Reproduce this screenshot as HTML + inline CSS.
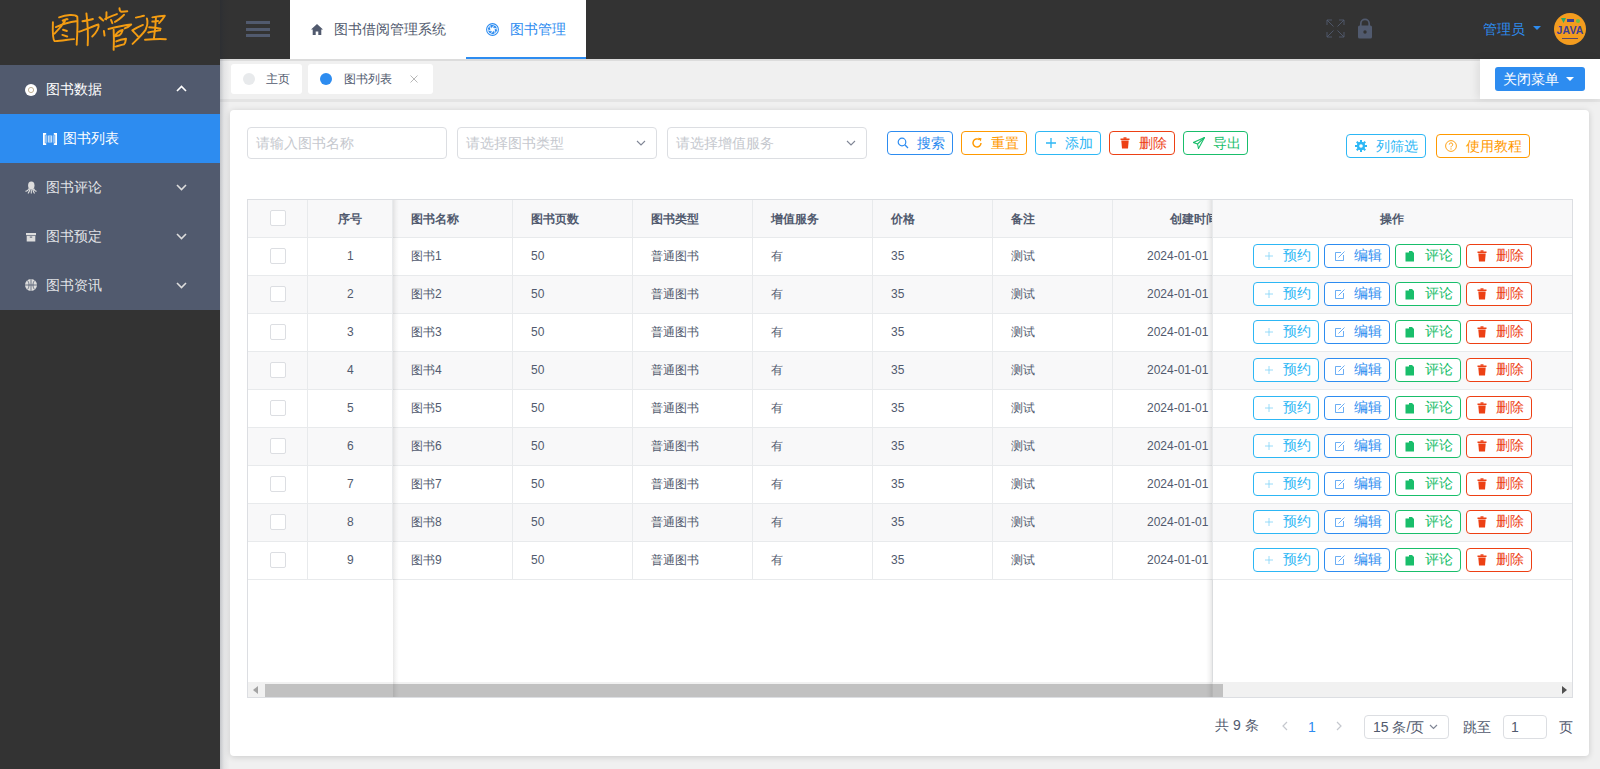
<!DOCTYPE html><html><head><meta charset="utf-8"><style>
*{box-sizing:border-box;margin:0;padding:0}
html,body{width:1600px;height:769px;overflow:hidden;background:#f0f0f0;font-family:"Liberation Sans",sans-serif;color:#515a6e;}
.a{position:absolute}
.t{position:absolute;white-space:nowrap;line-height:1}
#side{left:0;top:0;width:220px;height:769px;background:#333333;}
#menu{left:0;top:65px;width:220px;height:245px;background:#515a6e}
#head{left:220px;top:0;width:1380px;height:59px;background:#333333}
#tags{left:220px;top:59px;width:1380px;height:43px;background:#f0f0f0}
.card{left:230px;top:110px;width:1359px;height:646px;background:#fff;border-radius:4px;box-shadow:0 1px 6px rgba(0,0,0,.16)}
.btn{position:absolute;height:24px;border:1px solid;border-radius:4px;background:#fff;font-size:14px;line-height:22px}
.btn span{position:absolute;top:0;line-height:22px;white-space:nowrap}
.inp{position:absolute;height:32px;border:1px solid #dcdee2;border-radius:4px;background:#fff}
.ph{position:absolute;left:8px;top:0;line-height:30px;font-size:14px;color:#c5c8ce;white-space:nowrap}
.cell{position:absolute;font-size:12px;line-height:1;white-space:nowrap}
</style></head><body><div id="side" class="a"></div>
<svg class="a" style="left:50px;top:5px" width="120" height="50" viewBox="0 0 1846 769"><path d="M 45 265 C 40 400 35 520 70 555 C 150 560 280 530 370 525 M 140 190 C 250 150 380 140 420 180 C 430 300 420 450 410 610 M 250 215 C 200 300 130 380 70 440 M 90 340 C 200 290 300 260 400 250 M 195 240 C 220 225 250 215 270 220 M 200 380 L 260 400 M 190 460 L 265 485 M 500 250 C 560 240 620 230 660 215 M 450 410 C 550 380 650 330 745 300 C 760 340 720 420 650 485 M 560 130 C 575 250 590 450 580 620 M 760 190 C 780 210 800 230 820 240 M 769 190 L 809 230 M 869 110 C 869 150 867 190 864 220 M 849 215 C 909 185 969 160 1029 140 M 1069 50 C 1069 80 1079 100 1099 105 C 1129 100 1159 95 1189 95 M 1139 150 C 1089 200 1039 240 999 260 M 939 230 L 959 280 M 829 400 L 839 470 M 899 370 C 1019 340 1149 310 1249 300 C 1219 330 1189 345 1149 360 M 979 380 C 984 480 984 600 979 690 M 999 480 C 1029 420 1069 395 1119 385 C 1109 420 1089 450 1069 465 C 1049 470 1019 475 999 480 M 1019 560 C 1069 535 1119 525 1169 520 C 1164 560 1154 590 1139 605 C 1089 615 1049 630 1009 640 M 1322 194 C 1366 186 1406 174 1446 166 M 1490 206 C 1506 254 1502 310 1470 382 C 1414 462 1334 534 1270 598 M 1430 306 C 1382 326 1318 358 1266 390 C 1294 422 1326 446 1350 478 M 1574 190 C 1638 178 1702 166 1766 166 C 1742 206 1710 246 1678 278 M 1574 254 C 1606 250 1638 246 1662 246 M 1526 342 C 1582 346 1646 354 1702 366 M 1510 422 C 1574 410 1638 398 1694 390 M 1630 194 C 1626 302 1614 414 1598 518 M 1462 534 C 1566 526 1678 522 1782 526" fill="none" stroke="#f39c12" stroke-width="30" stroke-linecap="round" stroke-linejoin="round"/></svg>
<div id="menu" class="a"></div>
<div class="a" style="left:0;top:114px;width:220px;height:49px;background:#2d8cf0"></div>
<div class="t" style="left:63px;top:131px;font-size:14px;color:#fff">图书列表</div>
<div class="t" style="left:46px;top:82px;font-size:14px;color:#fff">图书数据</div>
<svg class="a" style="left:176px;top:85px" width="11" height="7" viewBox="0 0 11 7"><path d="M1 6 L5.5 1.5 L10 6" fill="none" stroke="#fff" stroke-width="1.6"/></svg>
<div class="t" style="left:46px;top:180px;font-size:14px;color:rgba(255,255,255,.85)">图书评论</div>
<svg class="a" style="left:176px;top:184px" width="11" height="7" viewBox="0 0 11 7"><path d="M1 1 L5.5 5.5 L10 1" fill="none" stroke="#ddd" stroke-width="1.6"/></svg>
<div class="t" style="left:46px;top:229px;font-size:14px;color:rgba(255,255,255,.85)">图书预定</div>
<svg class="a" style="left:176px;top:233px" width="11" height="7" viewBox="0 0 11 7"><path d="M1 1 L5.5 5.5 L10 1" fill="none" stroke="#ddd" stroke-width="1.6"/></svg>
<div class="t" style="left:46px;top:278px;font-size:14px;color:rgba(255,255,255,.85)">图书资讯</div>
<svg class="a" style="left:176px;top:282px" width="11" height="7" viewBox="0 0 11 7"><path d="M1 1 L5.5 5.5 L10 1" fill="none" stroke="#ddd" stroke-width="1.6"/></svg>
<svg class="a" style="left:25px;top:84px" width="12" height="12" viewBox="0 0 12 12"><circle cx="6" cy="6" r="6" fill="#fff"/><circle cx="6" cy="6" r="2.6" fill="none" stroke="#b9a98a" stroke-width="0.9"/></svg>
<svg class="a" style="left:43px;top:133px" width="14" height="12" viewBox="0 0 14 12"><path d="M0 0H3.2V1.8H1.8V10.2H3.2V12H0Z M14 0H10.8V1.8H12.2V10.2H10.8V12H14Z" fill="#fff"/><path d="M3 2.2V9.8 M5.3 2.5V9.5 M7 2.2V9.8 M8.7 2.5V9.5 M11 2.2V9.8" stroke="#fff" stroke-width="0.9"/></svg>
<svg class="a" style="left:25px;top:181px" width="12" height="13" viewBox="0 0 12 13"><ellipse cx="6.3" cy="4.5" rx="3.2" ry="4" fill="#ddd"/><path d="M4 7.5 C3 9.5 1.5 10.5 0.5 10 M5 8 C4.5 10 3.8 11.5 3 12.5 M6.3 8.5 V12.5 M7.6 8 C8.2 10 8.8 11.5 9.5 12.5 M8.6 7.5 C9.5 9.5 10.5 10.5 11.5 10" fill="none" stroke="#ddd" stroke-width="1.1"/></svg>
<svg class="a" style="left:26px;top:233px" width="10" height="8.5" viewBox="0 0 10 8.5"><rect x="0" y="0" width="10" height="2.2" fill="#ddd"/><rect x="0.7" y="2.8" width="8.6" height="5.7" fill="#ddd"/><rect x="3.8" y="3.6" width="2.4" height="1" fill="#515a6e"/></svg>
<svg class="a" style="left:25px;top:279px" width="12" height="12" viewBox="0 0 12 12"><circle cx="6" cy="6" r="6" fill="#ddd"/><path d="M6 0V12 M0 6H12 M2.5 1.5 C4.5 4 4.5 8 2.5 10.5 M9.5 1.5 C7.5 4 7.5 8 9.5 10.5" stroke="#515a6e" stroke-width="0.8" fill="none"/></svg>
<div id="head" class="a"></div>
<div class="a" style="left:220px;top:0;width:10px;height:769px;background:linear-gradient(90deg,rgba(20,30,50,.2),rgba(20,30,50,.06) 40%,rgba(0,0,0,0));z-index:5"></div>
<div class="a" style="left:246px;top:21px;width:24px;height:3px;background:#515a6e"></div>
<div class="a" style="left:246px;top:27.5px;width:24px;height:3px;background:#515a6e"></div>
<div class="a" style="left:246px;top:34px;width:24px;height:3px;background:#515a6e"></div>
<div class="a" style="left:290px;top:0;width:296px;height:59px;background:#fff"></div>
<div class="a" style="left:466px;top:57px;width:120px;height:2px;background:#2d8cf0"></div>
<svg class="a" style="left:311px;top:24px" width="12" height="11" viewBox="0 0 12 11"><path d="M6 0 L12 5.5 L10.3 5.5 L10.3 11 L7.3 11 L7.3 7.5 L4.7 7.5 L4.7 11 L1.7 11 L1.7 5.5 L0 5.5Z" fill="#515a6e"/></svg>
<div class="t" style="left:334px;top:22px;font-size:14px;color:#515a6e">图书借阅管理系统</div>
<svg class="a" style="left:486px;top:23px" width="13" height="13" viewBox="0 0 13 13"><circle cx="6.5" cy="6.5" r="5.9" fill="none" stroke="#2d8cf0" stroke-width="1.1"/><clipPath id="apc"><circle cx="6.5" cy="6.5" r="4.7"/></clipPath><g clip-path="url(#apc)"><circle cx="6.5" cy="6.5" r="4.7" fill="#2d8cf0"/><path d="M8.34 6.99L4.09 11.23 M6.99 8.34L1.20 6.78 M5.16 7.84L3.60 2.05 M4.66 6.01L8.91 1.77 M6.01 4.66L11.80 6.22 M7.84 5.16L9.40 10.95" stroke="#fff" stroke-width="0.9"/><path d="M8.34 6.99 L6.99 8.34 L5.16 7.84 L4.66 6.01 L6.01 4.66 L7.84 5.16Z" fill="#fff"/></g></svg>
<div class="t" style="left:510px;top:22px;font-size:14px;color:#2d8cf0">图书管理</div>
<svg class="a" style="left:1326px;top:19px" width="19" height="19" viewBox="0 0 19 19"><g fill="none" stroke="#515a6e" stroke-width="0.9"><path d="M1 6V1H6 M13 1H18V6 M18 13V18H13 M6 18H1V13 M1 1L7.5 7.5 M18 1L11.5 7.5 M18 18L11.5 11.5 M1 18L7.5 11.5"/></g></svg>
<svg class="a" style="left:1357px;top:18px" width="16" height="21" viewBox="0 0 16 21"><path d="M3.8 8V5.6A4.2 4.2 0 0 1 12.2 5.6V8" fill="none" stroke="#515a6e" stroke-width="1.7"/><rect x="1" y="7.5" width="14" height="13" rx="1.5" fill="#515a6e"/><circle cx="8" cy="14" r="1.7" fill="#333"/></svg>
<div class="t" style="left:1483px;top:22px;font-size:14px;color:#2d8cf0">管理员</div>
<svg class="a" style="left:1533px;top:26px" width="8" height="4" viewBox="0 0 8 4"><path d="M0 0H8L4 4Z" fill="#2d8cf0"/></svg>
<div class="a" style="left:1554px;top:13px;width:32px;height:32px;border-radius:50%;background:#f39c1f;overflow:hidden"><div class="t" style="left:0px;top:11.5px;width:32px;text-align:center;font-size:10.5px;font-weight:bold;color:#3d3f96;letter-spacing:0.2px">JAVA</div><svg class="a" style="left:7px;top:5px" width="5" height="5" viewBox="0 0 5 5"><path d="M0 0H5L2.5 5Z" fill="#2aa86a"/></svg><div class="a" style="left:13px;top:6px;width:7px;height:3px;background:#3d3f96"></div><div class="a" style="left:22px;top:5.5px;width:4px;height:4px;background:#6cbf4a;border-radius:50%"></div><div class="a" style="left:8px;top:25px;width:16px;height:1px;background:#5a4a6a"></div></div>
<div class="a" style="left:220px;top:59px;width:1380px;height:2px;background:#dcdcdc"></div>
<div class="a" style="left:220px;top:99px;width:1380px;height:3px;background:#e4e4e4"></div>
<div class="a" style="left:231px;top:64px;width:71px;height:30px;background:#fff;border-radius:3px"></div>
<div class="a" style="left:243px;top:73px;width:12px;height:12px;border-radius:50%;background:#e8eaec"></div>
<div class="t" style="left:266px;top:73px;font-size:12px;color:#515a6e">主页</div>
<div class="a" style="left:308px;top:64px;width:125px;height:30px;background:#fff;border-radius:3px"></div>
<div class="a" style="left:320px;top:73px;width:12px;height:12px;border-radius:50%;background:#2d8cf0"></div>
<div class="t" style="left:344px;top:73px;font-size:12px;color:#515a6e">图书列表</div>
<svg class="a" style="left:410px;top:75px" width="8" height="8" viewBox="0 0 8 8"><path d="M0.5 0.5L7.5 7.5M7.5 0.5L0.5 7.5" stroke="#b0b0b0" stroke-width="0.9"/></svg>
<div class="a" style="left:1480px;top:59px;width:120px;height:40px;background:#fff;box-shadow:-3px 0 8px rgba(0,0,0,.08)"></div>
<div class="a" style="left:1495px;top:67px;width:90px;height:24px;background:#2d8cf0;border-radius:3px"></div>
<div class="t" style="left:1503px;top:72px;font-size:14px;color:#fff">关闭菜单</div>
<svg class="a" style="left:1566px;top:77px" width="8" height="4" viewBox="0 0 8 4"><path d="M0 0H8L4 4Z" fill="#fff"/></svg>
<div class="a card"></div>
<div class="inp" style="left:247px;top:127px;width:200px"><div class="ph">请输入图书名称</div></div>
<div class="inp" style="left:457px;top:127px;width:200px"><div class="ph">请选择图书类型</div><svg class="a" style="left:178px;top:11.5px" width="10" height="6" viewBox="0 0 10 6"><path d="M1 1L5 5L9 1" fill="none" stroke="#808695" stroke-width="1.1"/></svg></div>
<div class="inp" style="left:667px;top:127px;width:200px"><div class="ph">请选择增值服务</div><svg class="a" style="left:178px;top:11.5px" width="10" height="6" viewBox="0 0 10 6"><path d="M1 1L5 5L9 1" fill="none" stroke="#808695" stroke-width="1.1"/></svg></div>
<div class="btn" style="left:887px;top:131px;width:66px;border-color:#2d8cf0;color:#2d8cf0"><svg class="a" style="left:9px;top:5px" width="12" height="12" viewBox="0 0 12 12"><circle cx="5" cy="5" r="3.8" fill="none" stroke="#2d8cf0" stroke-width="1.2"/><path d="M7.8 7.8L11 11" stroke="#2d8cf0" stroke-width="1.3"/></svg><span style="left:29px;top:0px">搜索</span></div>
<div class="btn" style="left:961px;top:131px;width:66px;border-color:#ff9900;color:#ff9900"><svg class="a" style="left:9px;top:5px" width="12" height="12" viewBox="0 0 12 12"><path d="M10 6A4 4 0 1 1 8.5 2.8" fill="none" stroke="#ff9900" stroke-width="1.4"/><path d="M7 0.8L10.5 1.2L9.8 4.6Z" fill="#ff9900"/></svg><span style="left:29px;top:0px">重置</span></div>
<div class="btn" style="left:1035px;top:131px;width:66px;border-color:#2db7f5;color:#2db7f5"><svg class="a" style="left:9px;top:5px" width="12" height="12" viewBox="0 0 12 12"><path d="M6 1V11M1 6H11" stroke="#2db7f5" stroke-width="1.3"/></svg><span style="left:29px;top:0px">添加</span></div>
<div class="btn" style="left:1109px;top:131px;width:66px;border-color:#ed4014;color:#ed4014"><svg class="a" style="left:10px;top:5px" width="10" height="12" viewBox="0 0 10 12"><rect x="0.5" y="1.5" width="9" height="1.5" fill="#ed4014"/><rect x="3.5" y="0.3" width="3" height="1.5" fill="#ed4014"/><path d="M1.3 3.5H8.7L8 11.5H2Z" fill="#ed4014"/></svg><span style="left:29px;top:0px">删除</span></div>
<div class="btn" style="left:1183px;top:131px;width:65px;border-color:#19be6b;color:#19be6b"><svg class="a" style="left:9px;top:5px" width="12" height="12" viewBox="0 0 12 12"><path d="M11.5 0.5L0.5 5.5L4.5 7L5.5 11.5Z" fill="none" stroke="#19be6b" stroke-width="1.1"/><path d="M11.5 0.5L4.5 7" stroke="#19be6b" stroke-width="1.1"/></svg><span style="left:29px;top:0px">导出</span></div>
<div class="btn" style="left:1346px;top:134px;width:80px;border-color:#2db7f5;color:#2db7f5"><svg class="a" style="left:8px;top:5px" width="12" height="12" viewBox="0 0 12 12"><g fill="#2db7f5"><circle cx="6" cy="6" r="4.2"/><rect x="5" y="0" width="2" height="12"/><rect x="0" y="5" width="12" height="2"/><rect x="5" y="0" width="2" height="12" transform="rotate(45 6 6)"/><rect x="5" y="0" width="2" height="12" transform="rotate(-45 6 6)"/></g><circle cx="6" cy="6" r="1.8" fill="#fff"/></svg><span style="left:29px;top:0px">列筛选</span></div>
<div class="btn" style="left:1436px;top:134px;width:94px;border-color:#ff9900;color:#ff9900"><svg class="a" style="left:8px;top:5px" width="12" height="12" viewBox="0 0 12 12"><circle cx="6" cy="6" r="5.4" fill="none" stroke="#ff9900" stroke-width="0.9"/><path d="M4.3 4.6A1.7 1.7 0 1 1 6.5 6.2C6 6.4 6 6.8 6 7.4" fill="none" stroke="#ff9900" stroke-width="0.9"/><circle cx="6" cy="8.9" r="0.6" fill="#ff9900"/></svg><span style="left:29px;top:0px">使用教程</span></div>
<div class="a" style="left:247px;top:199px;width:1326px;height:499px;border:1px solid #dcdee2;background:#fff"></div>
<div class="a" style="left:248px;top:200px;width:1324px;height:37px;background:#f8f8f9"></div>
<div class="a" style="left:248px;top:237px;width:1324px;height:38px;background:#fff;border-top:1px solid #e8eaec"></div>
<div class="a" style="left:248px;top:275px;width:1324px;height:38px;background:#f8f8f9;border-top:1px solid #e8eaec"></div>
<div class="a" style="left:248px;top:313px;width:1324px;height:38px;background:#fff;border-top:1px solid #e8eaec"></div>
<div class="a" style="left:248px;top:351px;width:1324px;height:38px;background:#f8f8f9;border-top:1px solid #e8eaec"></div>
<div class="a" style="left:248px;top:389px;width:1324px;height:38px;background:#fff;border-top:1px solid #e8eaec"></div>
<div class="a" style="left:248px;top:427px;width:1324px;height:38px;background:#f8f8f9;border-top:1px solid #e8eaec"></div>
<div class="a" style="left:248px;top:465px;width:1324px;height:38px;background:#fff;border-top:1px solid #e8eaec"></div>
<div class="a" style="left:248px;top:503px;width:1324px;height:38px;background:#f8f8f9;border-top:1px solid #e8eaec"></div>
<div class="a" style="left:248px;top:541px;width:1324px;height:38px;background:#fff;border-top:1px solid #e8eaec"></div>
<div class="a" style="left:248px;top:579px;width:1324px;height:1px;background:#e8eaec"></div>
<div class="a" style="left:307px;top:200px;width:1px;height:380px;background:#e8eaec"></div>
<div class="a" style="left:392px;top:200px;width:1px;height:380px;background:#e8eaec"></div>
<div class="a" style="left:512px;top:200px;width:1px;height:380px;background:#e8eaec"></div>
<div class="a" style="left:632px;top:200px;width:1px;height:380px;background:#e8eaec"></div>
<div class="a" style="left:752px;top:200px;width:1px;height:380px;background:#e8eaec"></div>
<div class="a" style="left:872px;top:200px;width:1px;height:380px;background:#e8eaec"></div>
<div class="a" style="left:992px;top:200px;width:1px;height:380px;background:#e8eaec"></div>
<div class="a" style="left:1112px;top:200px;width:1px;height:380px;background:#e8eaec"></div>
<div class="cell" style="left:411px;top:213px;font-weight:bold">图书名称</div>
<div class="cell" style="left:531px;top:213px;font-weight:bold">图书页数</div>
<div class="cell" style="left:651px;top:213px;font-weight:bold">图书类型</div>
<div class="cell" style="left:771px;top:213px;font-weight:bold">增值服务</div>
<div class="cell" style="left:891px;top:213px;font-weight:bold">价格</div>
<div class="cell" style="left:1011px;top:213px;font-weight:bold">备注</div>
<div class="cell" style="left:1170px;top:213px;font-weight:bold">创建时间</div>
<div class="cell" style="left:338px;top:213px;font-weight:bold">序号</div>
<div class="cell" style="left:411px;top:250px">图书1</div>
<div class="cell" style="left:531px;top:250px">50</div>
<div class="cell" style="left:651px;top:250px">普通图书</div>
<div class="cell" style="left:771px;top:250px">有</div>
<div class="cell" style="left:891px;top:250px">35</div>
<div class="cell" style="left:1011px;top:250px">测试</div>
<div class="cell" style="left:1147px;top:250px">2024-01-01</div>
<div class="cell" style="left:347px;top:250px">1</div>
<div class="cell" style="left:411px;top:288px">图书2</div>
<div class="cell" style="left:531px;top:288px">50</div>
<div class="cell" style="left:651px;top:288px">普通图书</div>
<div class="cell" style="left:771px;top:288px">有</div>
<div class="cell" style="left:891px;top:288px">35</div>
<div class="cell" style="left:1011px;top:288px">测试</div>
<div class="cell" style="left:1147px;top:288px">2024-01-01</div>
<div class="cell" style="left:347px;top:288px">2</div>
<div class="cell" style="left:411px;top:326px">图书3</div>
<div class="cell" style="left:531px;top:326px">50</div>
<div class="cell" style="left:651px;top:326px">普通图书</div>
<div class="cell" style="left:771px;top:326px">有</div>
<div class="cell" style="left:891px;top:326px">35</div>
<div class="cell" style="left:1011px;top:326px">测试</div>
<div class="cell" style="left:1147px;top:326px">2024-01-01</div>
<div class="cell" style="left:347px;top:326px">3</div>
<div class="cell" style="left:411px;top:364px">图书4</div>
<div class="cell" style="left:531px;top:364px">50</div>
<div class="cell" style="left:651px;top:364px">普通图书</div>
<div class="cell" style="left:771px;top:364px">有</div>
<div class="cell" style="left:891px;top:364px">35</div>
<div class="cell" style="left:1011px;top:364px">测试</div>
<div class="cell" style="left:1147px;top:364px">2024-01-01</div>
<div class="cell" style="left:347px;top:364px">4</div>
<div class="cell" style="left:411px;top:402px">图书5</div>
<div class="cell" style="left:531px;top:402px">50</div>
<div class="cell" style="left:651px;top:402px">普通图书</div>
<div class="cell" style="left:771px;top:402px">有</div>
<div class="cell" style="left:891px;top:402px">35</div>
<div class="cell" style="left:1011px;top:402px">测试</div>
<div class="cell" style="left:1147px;top:402px">2024-01-01</div>
<div class="cell" style="left:347px;top:402px">5</div>
<div class="cell" style="left:411px;top:440px">图书6</div>
<div class="cell" style="left:531px;top:440px">50</div>
<div class="cell" style="left:651px;top:440px">普通图书</div>
<div class="cell" style="left:771px;top:440px">有</div>
<div class="cell" style="left:891px;top:440px">35</div>
<div class="cell" style="left:1011px;top:440px">测试</div>
<div class="cell" style="left:1147px;top:440px">2024-01-01</div>
<div class="cell" style="left:347px;top:440px">6</div>
<div class="cell" style="left:411px;top:478px">图书7</div>
<div class="cell" style="left:531px;top:478px">50</div>
<div class="cell" style="left:651px;top:478px">普通图书</div>
<div class="cell" style="left:771px;top:478px">有</div>
<div class="cell" style="left:891px;top:478px">35</div>
<div class="cell" style="left:1011px;top:478px">测试</div>
<div class="cell" style="left:1147px;top:478px">2024-01-01</div>
<div class="cell" style="left:347px;top:478px">7</div>
<div class="cell" style="left:411px;top:516px">图书8</div>
<div class="cell" style="left:531px;top:516px">50</div>
<div class="cell" style="left:651px;top:516px">普通图书</div>
<div class="cell" style="left:771px;top:516px">有</div>
<div class="cell" style="left:891px;top:516px">35</div>
<div class="cell" style="left:1011px;top:516px">测试</div>
<div class="cell" style="left:1147px;top:516px">2024-01-01</div>
<div class="cell" style="left:347px;top:516px">8</div>
<div class="cell" style="left:411px;top:554px">图书9</div>
<div class="cell" style="left:531px;top:554px">50</div>
<div class="cell" style="left:651px;top:554px">普通图书</div>
<div class="cell" style="left:771px;top:554px">有</div>
<div class="cell" style="left:891px;top:554px">35</div>
<div class="cell" style="left:1011px;top:554px">测试</div>
<div class="cell" style="left:1147px;top:554px">2024-01-01</div>
<div class="cell" style="left:347px;top:554px">9</div>
<div class="a" style="left:270px;top:210px;width:16px;height:16px;border:1px solid #dcdee2;border-radius:2px;background:#fff"></div>
<div class="a" style="left:270px;top:248px;width:16px;height:16px;border:1px solid #dcdee2;border-radius:2px;background:#fff"></div>
<div class="a" style="left:270px;top:286px;width:16px;height:16px;border:1px solid #dcdee2;border-radius:2px;background:#fff"></div>
<div class="a" style="left:270px;top:324px;width:16px;height:16px;border:1px solid #dcdee2;border-radius:2px;background:#fff"></div>
<div class="a" style="left:270px;top:362px;width:16px;height:16px;border:1px solid #dcdee2;border-radius:2px;background:#fff"></div>
<div class="a" style="left:270px;top:400px;width:16px;height:16px;border:1px solid #dcdee2;border-radius:2px;background:#fff"></div>
<div class="a" style="left:270px;top:438px;width:16px;height:16px;border:1px solid #dcdee2;border-radius:2px;background:#fff"></div>
<div class="a" style="left:270px;top:476px;width:16px;height:16px;border:1px solid #dcdee2;border-radius:2px;background:#fff"></div>
<div class="a" style="left:270px;top:514px;width:16px;height:16px;border:1px solid #dcdee2;border-radius:2px;background:#fff"></div>
<div class="a" style="left:270px;top:552px;width:16px;height:16px;border:1px solid #dcdee2;border-radius:2px;background:#fff"></div>
<div class="a" style="left:1212px;top:200px;width:360px;height:380px;background:transparent"></div>
<div class="a" style="left:1212px;top:200px;width:360px;height:37px;background:#f8f8f9"></div>
<div class="a" style="left:1212px;top:200px;width:1px;height:497px;background:#e8eaec"></div>
<div class="cell" style="left:1380px;top:213px;font-weight:bold">操作</div>
<div class="btn" style="left:1253px;top:244px;width:66px;border-color:#2db7f5;color:#2db7f5"><svg class="a" style="left:10px;top:5px" width="10" height="12" viewBox="0 0 10 12"><path d="M5 2V10M1 6H9" stroke="#2db7f5" stroke-width="0.8" opacity=".6"/></svg><span style="left:29px;top:-1px">预约</span></div>
<div class="btn" style="left:1324px;top:244px;width:66px;border-color:#2d8cf0;color:#2d8cf0"><svg class="a" style="left:9px;top:5px" width="12" height="12" viewBox="0 0 12 12"><path d="M7 2.5H1.5V10.5H9.5V5" fill="none" stroke="#2d8cf0" stroke-width="1" opacity=".7"/><path d="M4.5 7.5L10.5 1.5" stroke="#2d8cf0" stroke-width="1" opacity=".7"/></svg><span style="left:29px;top:-1px">编辑</span></div>
<div class="btn" style="left:1395px;top:244px;width:66px;border-color:#19be6b;color:#19be6b"><svg class="a" style="left:9px;top:5px" width="10" height="12" viewBox="0 0 10 12"><path d="M0.5 2.5H4V1H7L9 3V11.5H0.5Z" fill="#19be6b"/></svg><span style="left:29px;top:-1px">评论</span></div>
<div class="btn" style="left:1466px;top:244px;width:66px;border-color:#ed4014;color:#ed4014"><svg class="a" style="left:10px;top:5px" width="10" height="12" viewBox="0 0 10 12"><rect x="0.5" y="1.5" width="9" height="1.5" fill="#ed4014"/><rect x="3.5" y="0.3" width="3" height="1.5" fill="#ed4014"/><path d="M1.3 3.5H8.7L8 11.5H2Z" fill="#ed4014"/></svg><span style="left:29px;top:-1px">删除</span></div>
<div class="btn" style="left:1253px;top:282px;width:66px;border-color:#2db7f5;color:#2db7f5"><svg class="a" style="left:10px;top:5px" width="10" height="12" viewBox="0 0 10 12"><path d="M5 2V10M1 6H9" stroke="#2db7f5" stroke-width="0.8" opacity=".6"/></svg><span style="left:29px;top:-1px">预约</span></div>
<div class="btn" style="left:1324px;top:282px;width:66px;border-color:#2d8cf0;color:#2d8cf0"><svg class="a" style="left:9px;top:5px" width="12" height="12" viewBox="0 0 12 12"><path d="M7 2.5H1.5V10.5H9.5V5" fill="none" stroke="#2d8cf0" stroke-width="1" opacity=".7"/><path d="M4.5 7.5L10.5 1.5" stroke="#2d8cf0" stroke-width="1" opacity=".7"/></svg><span style="left:29px;top:-1px">编辑</span></div>
<div class="btn" style="left:1395px;top:282px;width:66px;border-color:#19be6b;color:#19be6b"><svg class="a" style="left:9px;top:5px" width="10" height="12" viewBox="0 0 10 12"><path d="M0.5 2.5H4V1H7L9 3V11.5H0.5Z" fill="#19be6b"/></svg><span style="left:29px;top:-1px">评论</span></div>
<div class="btn" style="left:1466px;top:282px;width:66px;border-color:#ed4014;color:#ed4014"><svg class="a" style="left:10px;top:5px" width="10" height="12" viewBox="0 0 10 12"><rect x="0.5" y="1.5" width="9" height="1.5" fill="#ed4014"/><rect x="3.5" y="0.3" width="3" height="1.5" fill="#ed4014"/><path d="M1.3 3.5H8.7L8 11.5H2Z" fill="#ed4014"/></svg><span style="left:29px;top:-1px">删除</span></div>
<div class="btn" style="left:1253px;top:320px;width:66px;border-color:#2db7f5;color:#2db7f5"><svg class="a" style="left:10px;top:5px" width="10" height="12" viewBox="0 0 10 12"><path d="M5 2V10M1 6H9" stroke="#2db7f5" stroke-width="0.8" opacity=".6"/></svg><span style="left:29px;top:-1px">预约</span></div>
<div class="btn" style="left:1324px;top:320px;width:66px;border-color:#2d8cf0;color:#2d8cf0"><svg class="a" style="left:9px;top:5px" width="12" height="12" viewBox="0 0 12 12"><path d="M7 2.5H1.5V10.5H9.5V5" fill="none" stroke="#2d8cf0" stroke-width="1" opacity=".7"/><path d="M4.5 7.5L10.5 1.5" stroke="#2d8cf0" stroke-width="1" opacity=".7"/></svg><span style="left:29px;top:-1px">编辑</span></div>
<div class="btn" style="left:1395px;top:320px;width:66px;border-color:#19be6b;color:#19be6b"><svg class="a" style="left:9px;top:5px" width="10" height="12" viewBox="0 0 10 12"><path d="M0.5 2.5H4V1H7L9 3V11.5H0.5Z" fill="#19be6b"/></svg><span style="left:29px;top:-1px">评论</span></div>
<div class="btn" style="left:1466px;top:320px;width:66px;border-color:#ed4014;color:#ed4014"><svg class="a" style="left:10px;top:5px" width="10" height="12" viewBox="0 0 10 12"><rect x="0.5" y="1.5" width="9" height="1.5" fill="#ed4014"/><rect x="3.5" y="0.3" width="3" height="1.5" fill="#ed4014"/><path d="M1.3 3.5H8.7L8 11.5H2Z" fill="#ed4014"/></svg><span style="left:29px;top:-1px">删除</span></div>
<div class="btn" style="left:1253px;top:358px;width:66px;border-color:#2db7f5;color:#2db7f5"><svg class="a" style="left:10px;top:5px" width="10" height="12" viewBox="0 0 10 12"><path d="M5 2V10M1 6H9" stroke="#2db7f5" stroke-width="0.8" opacity=".6"/></svg><span style="left:29px;top:-1px">预约</span></div>
<div class="btn" style="left:1324px;top:358px;width:66px;border-color:#2d8cf0;color:#2d8cf0"><svg class="a" style="left:9px;top:5px" width="12" height="12" viewBox="0 0 12 12"><path d="M7 2.5H1.5V10.5H9.5V5" fill="none" stroke="#2d8cf0" stroke-width="1" opacity=".7"/><path d="M4.5 7.5L10.5 1.5" stroke="#2d8cf0" stroke-width="1" opacity=".7"/></svg><span style="left:29px;top:-1px">编辑</span></div>
<div class="btn" style="left:1395px;top:358px;width:66px;border-color:#19be6b;color:#19be6b"><svg class="a" style="left:9px;top:5px" width="10" height="12" viewBox="0 0 10 12"><path d="M0.5 2.5H4V1H7L9 3V11.5H0.5Z" fill="#19be6b"/></svg><span style="left:29px;top:-1px">评论</span></div>
<div class="btn" style="left:1466px;top:358px;width:66px;border-color:#ed4014;color:#ed4014"><svg class="a" style="left:10px;top:5px" width="10" height="12" viewBox="0 0 10 12"><rect x="0.5" y="1.5" width="9" height="1.5" fill="#ed4014"/><rect x="3.5" y="0.3" width="3" height="1.5" fill="#ed4014"/><path d="M1.3 3.5H8.7L8 11.5H2Z" fill="#ed4014"/></svg><span style="left:29px;top:-1px">删除</span></div>
<div class="btn" style="left:1253px;top:396px;width:66px;border-color:#2db7f5;color:#2db7f5"><svg class="a" style="left:10px;top:5px" width="10" height="12" viewBox="0 0 10 12"><path d="M5 2V10M1 6H9" stroke="#2db7f5" stroke-width="0.8" opacity=".6"/></svg><span style="left:29px;top:-1px">预约</span></div>
<div class="btn" style="left:1324px;top:396px;width:66px;border-color:#2d8cf0;color:#2d8cf0"><svg class="a" style="left:9px;top:5px" width="12" height="12" viewBox="0 0 12 12"><path d="M7 2.5H1.5V10.5H9.5V5" fill="none" stroke="#2d8cf0" stroke-width="1" opacity=".7"/><path d="M4.5 7.5L10.5 1.5" stroke="#2d8cf0" stroke-width="1" opacity=".7"/></svg><span style="left:29px;top:-1px">编辑</span></div>
<div class="btn" style="left:1395px;top:396px;width:66px;border-color:#19be6b;color:#19be6b"><svg class="a" style="left:9px;top:5px" width="10" height="12" viewBox="0 0 10 12"><path d="M0.5 2.5H4V1H7L9 3V11.5H0.5Z" fill="#19be6b"/></svg><span style="left:29px;top:-1px">评论</span></div>
<div class="btn" style="left:1466px;top:396px;width:66px;border-color:#ed4014;color:#ed4014"><svg class="a" style="left:10px;top:5px" width="10" height="12" viewBox="0 0 10 12"><rect x="0.5" y="1.5" width="9" height="1.5" fill="#ed4014"/><rect x="3.5" y="0.3" width="3" height="1.5" fill="#ed4014"/><path d="M1.3 3.5H8.7L8 11.5H2Z" fill="#ed4014"/></svg><span style="left:29px;top:-1px">删除</span></div>
<div class="btn" style="left:1253px;top:434px;width:66px;border-color:#2db7f5;color:#2db7f5"><svg class="a" style="left:10px;top:5px" width="10" height="12" viewBox="0 0 10 12"><path d="M5 2V10M1 6H9" stroke="#2db7f5" stroke-width="0.8" opacity=".6"/></svg><span style="left:29px;top:-1px">预约</span></div>
<div class="btn" style="left:1324px;top:434px;width:66px;border-color:#2d8cf0;color:#2d8cf0"><svg class="a" style="left:9px;top:5px" width="12" height="12" viewBox="0 0 12 12"><path d="M7 2.5H1.5V10.5H9.5V5" fill="none" stroke="#2d8cf0" stroke-width="1" opacity=".7"/><path d="M4.5 7.5L10.5 1.5" stroke="#2d8cf0" stroke-width="1" opacity=".7"/></svg><span style="left:29px;top:-1px">编辑</span></div>
<div class="btn" style="left:1395px;top:434px;width:66px;border-color:#19be6b;color:#19be6b"><svg class="a" style="left:9px;top:5px" width="10" height="12" viewBox="0 0 10 12"><path d="M0.5 2.5H4V1H7L9 3V11.5H0.5Z" fill="#19be6b"/></svg><span style="left:29px;top:-1px">评论</span></div>
<div class="btn" style="left:1466px;top:434px;width:66px;border-color:#ed4014;color:#ed4014"><svg class="a" style="left:10px;top:5px" width="10" height="12" viewBox="0 0 10 12"><rect x="0.5" y="1.5" width="9" height="1.5" fill="#ed4014"/><rect x="3.5" y="0.3" width="3" height="1.5" fill="#ed4014"/><path d="M1.3 3.5H8.7L8 11.5H2Z" fill="#ed4014"/></svg><span style="left:29px;top:-1px">删除</span></div>
<div class="btn" style="left:1253px;top:472px;width:66px;border-color:#2db7f5;color:#2db7f5"><svg class="a" style="left:10px;top:5px" width="10" height="12" viewBox="0 0 10 12"><path d="M5 2V10M1 6H9" stroke="#2db7f5" stroke-width="0.8" opacity=".6"/></svg><span style="left:29px;top:-1px">预约</span></div>
<div class="btn" style="left:1324px;top:472px;width:66px;border-color:#2d8cf0;color:#2d8cf0"><svg class="a" style="left:9px;top:5px" width="12" height="12" viewBox="0 0 12 12"><path d="M7 2.5H1.5V10.5H9.5V5" fill="none" stroke="#2d8cf0" stroke-width="1" opacity=".7"/><path d="M4.5 7.5L10.5 1.5" stroke="#2d8cf0" stroke-width="1" opacity=".7"/></svg><span style="left:29px;top:-1px">编辑</span></div>
<div class="btn" style="left:1395px;top:472px;width:66px;border-color:#19be6b;color:#19be6b"><svg class="a" style="left:9px;top:5px" width="10" height="12" viewBox="0 0 10 12"><path d="M0.5 2.5H4V1H7L9 3V11.5H0.5Z" fill="#19be6b"/></svg><span style="left:29px;top:-1px">评论</span></div>
<div class="btn" style="left:1466px;top:472px;width:66px;border-color:#ed4014;color:#ed4014"><svg class="a" style="left:10px;top:5px" width="10" height="12" viewBox="0 0 10 12"><rect x="0.5" y="1.5" width="9" height="1.5" fill="#ed4014"/><rect x="3.5" y="0.3" width="3" height="1.5" fill="#ed4014"/><path d="M1.3 3.5H8.7L8 11.5H2Z" fill="#ed4014"/></svg><span style="left:29px;top:-1px">删除</span></div>
<div class="btn" style="left:1253px;top:510px;width:66px;border-color:#2db7f5;color:#2db7f5"><svg class="a" style="left:10px;top:5px" width="10" height="12" viewBox="0 0 10 12"><path d="M5 2V10M1 6H9" stroke="#2db7f5" stroke-width="0.8" opacity=".6"/></svg><span style="left:29px;top:-1px">预约</span></div>
<div class="btn" style="left:1324px;top:510px;width:66px;border-color:#2d8cf0;color:#2d8cf0"><svg class="a" style="left:9px;top:5px" width="12" height="12" viewBox="0 0 12 12"><path d="M7 2.5H1.5V10.5H9.5V5" fill="none" stroke="#2d8cf0" stroke-width="1" opacity=".7"/><path d="M4.5 7.5L10.5 1.5" stroke="#2d8cf0" stroke-width="1" opacity=".7"/></svg><span style="left:29px;top:-1px">编辑</span></div>
<div class="btn" style="left:1395px;top:510px;width:66px;border-color:#19be6b;color:#19be6b"><svg class="a" style="left:9px;top:5px" width="10" height="12" viewBox="0 0 10 12"><path d="M0.5 2.5H4V1H7L9 3V11.5H0.5Z" fill="#19be6b"/></svg><span style="left:29px;top:-1px">评论</span></div>
<div class="btn" style="left:1466px;top:510px;width:66px;border-color:#ed4014;color:#ed4014"><svg class="a" style="left:10px;top:5px" width="10" height="12" viewBox="0 0 10 12"><rect x="0.5" y="1.5" width="9" height="1.5" fill="#ed4014"/><rect x="3.5" y="0.3" width="3" height="1.5" fill="#ed4014"/><path d="M1.3 3.5H8.7L8 11.5H2Z" fill="#ed4014"/></svg><span style="left:29px;top:-1px">删除</span></div>
<div class="btn" style="left:1253px;top:548px;width:66px;border-color:#2db7f5;color:#2db7f5"><svg class="a" style="left:10px;top:5px" width="10" height="12" viewBox="0 0 10 12"><path d="M5 2V10M1 6H9" stroke="#2db7f5" stroke-width="0.8" opacity=".6"/></svg><span style="left:29px;top:-1px">预约</span></div>
<div class="btn" style="left:1324px;top:548px;width:66px;border-color:#2d8cf0;color:#2d8cf0"><svg class="a" style="left:9px;top:5px" width="12" height="12" viewBox="0 0 12 12"><path d="M7 2.5H1.5V10.5H9.5V5" fill="none" stroke="#2d8cf0" stroke-width="1" opacity=".7"/><path d="M4.5 7.5L10.5 1.5" stroke="#2d8cf0" stroke-width="1" opacity=".7"/></svg><span style="left:29px;top:-1px">编辑</span></div>
<div class="btn" style="left:1395px;top:548px;width:66px;border-color:#19be6b;color:#19be6b"><svg class="a" style="left:9px;top:5px" width="10" height="12" viewBox="0 0 10 12"><path d="M0.5 2.5H4V1H7L9 3V11.5H0.5Z" fill="#19be6b"/></svg><span style="left:29px;top:-1px">评论</span></div>
<div class="btn" style="left:1466px;top:548px;width:66px;border-color:#ed4014;color:#ed4014"><svg class="a" style="left:10px;top:5px" width="10" height="12" viewBox="0 0 10 12"><rect x="0.5" y="1.5" width="9" height="1.5" fill="#ed4014"/><rect x="3.5" y="0.3" width="3" height="1.5" fill="#ed4014"/><path d="M1.3 3.5H8.7L8 11.5H2Z" fill="#ed4014"/></svg><span style="left:29px;top:-1px">删除</span></div>
<div class="a" style="left:248px;top:682px;width:1324px;height:15px;background:#f1f1f1"></div>
<div class="a" style="left:265px;top:684px;width:958px;height:13px;background:#c1c1c1"></div>
<svg class="a" style="left:253px;top:686px" width="6" height="8" viewBox="0 0 6 8"><path d="M5 0V8L0 4Z" fill="#a3a3a3"/></svg>
<svg class="a" style="left:1562px;top:686px" width="6" height="8" viewBox="0 0 6 8"><path d="M0 0V8L5 4Z" fill="#505050"/></svg>
<div class="a" style="left:393px;top:200px;width:6px;height:497px;background:linear-gradient(90deg,rgba(0,0,0,.09),rgba(0,0,0,.03) 50%,rgba(0,0,0,0))"></div>
<div class="a" style="left:1206px;top:200px;width:6px;height:497px;background:linear-gradient(270deg,rgba(0,0,0,.09),rgba(0,0,0,.03) 50%,rgba(0,0,0,0))"></div>
<div class="a" style="left:1212px;top:579px;width:1px;height:118px;background:rgba(0,0,0,.06)"></div>
<div class="t" style="left:1215px;top:718px;font-size:14px;color:#515a6e">共 9 条</div>
<svg class="a" style="left:1281px;top:721px" width="7" height="10" viewBox="0 0 7 10"><path d="M6 1L2 5L6 9" fill="none" stroke="#c5c8ce" stroke-width="1.2"/></svg>
<div class="t" style="left:1308px;top:720px;font-size:14px;color:#2d8cf0">1</div>
<svg class="a" style="left:1336px;top:721px" width="7" height="10" viewBox="0 0 7 10"><path d="M1 1L5 5L1 9" fill="none" stroke="#c5c8ce" stroke-width="1.2"/></svg>
<div class="inp" style="left:1364px;top:715px;width:85px;height:24px"></div>
<div class="t" style="left:1373px;top:720px;font-size:14px;color:#515a6e">15 条/页</div>
<svg class="a" style="left:1429px;top:724px" width="9" height="6" viewBox="0 0 9 6"><path d="M1 1L4.5 4.5L8 1" fill="none" stroke="#808695" stroke-width="1.2"/></svg>
<div class="t" style="left:1463px;top:720px;font-size:14px;color:#515a6e">跳至</div>
<div class="inp" style="left:1503px;top:715px;width:44px;height:24px"></div>
<div class="t" style="left:1511px;top:720px;font-size:14px;color:#515a6e">1</div>
<div class="t" style="left:1559px;top:720px;font-size:14px;color:#515a6e">页</div></body></html>
